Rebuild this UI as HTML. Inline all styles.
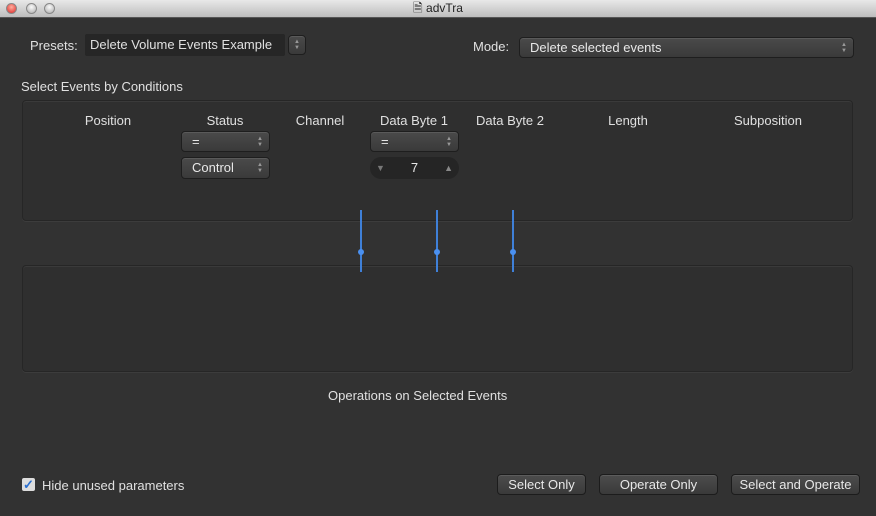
<!DOCTYPE html><html><head><style>
body{margin:0;width:876px;height:516px;background:#323232;font-family:"Liberation Sans",sans-serif;color:#e0e0e0;font-size:13px;position:relative;overflow:hidden}
.a{position:absolute}
.title{left:0;top:0;width:876px;height:17px;background:linear-gradient(#e8e8e8,#bdbdbd);border-bottom:1px solid #555;text-align:center;color:#222;font-size:12px;line-height:17px}
.tl{width:11px;height:11px;border-radius:50%;top:3px;background:radial-gradient(circle at 50% 35%,#fafafa,#aaa);border:1px solid #888;box-sizing:border-box}
.pop{background:linear-gradient(#4a4a4a,#3a3a3a);border:1px solid #1e1e1e;border-radius:4px;box-shadow:inset 0 1px 0 #5a5a5a;box-sizing:border-box;color:#e8e8e8;padding-left:10px}
.ar{position:absolute;right:6px;top:50%;transform:translateY(-50%);font-size:6px;line-height:6px;color:#999;text-align:center}
.panel{background:#2f2f2f;border:1px solid #262626;border-radius:4px;box-shadow:inset 0 1px 0 #3a3a3a,0 1px 0 #3c3c3c;box-sizing:border-box}
.btn{background:linear-gradient(#4c4c4c,#3a3a3a);border:1px solid #1c1c1c;border-radius:4px;box-shadow:inset 0 1px 0 #5c5c5c;box-sizing:border-box;text-align:center;color:#e8e8e8;height:21px;line-height:19px}
.hd{top:113px;text-align:center}
.ln{width:2px;background:#3f80d8}
.dot{width:6px;height:6px;border-radius:50%;background:#4a90f0}
</style></head><body>
<div class="a title">🗎 advTra</div>
<div class="a tl" style="left:6px;background:radial-gradient(circle at 50% 35%,#ffb0a0,#d22)"></div>
<div class="a tl" style="left:26px"></div>
<div class="a tl" style="left:44px"></div>
<div class="a" style="left:30px;top:38px">Presets:</div>
<div class="a" style="left:85px;top:34px;width:200px;height:22px;background:#262626;border-radius:2px;line-height:22px;padding-left:5px;box-sizing:border-box">Delete Volume Events Example</div>
<div class="a pop" style="left:288px;top:35px;width:18px;height:20px;padding:0"><div class="ar" style="right:5px">▲<br>▼</div></div>
<div class="a" style="left:473px;top:39px">Mode:</div>
<div class="a pop" style="left:519px;top:37px;width:335px;height:21px;line-height:19px">Delete selected events<div class="ar">▲<br>▼</div></div>
<div class="a" style="left:21px;top:79px">Select Events by Conditions</div>
<div class="a panel" style="left:22px;top:100px;width:831px;height:121px"></div>
<div class="a hd" style="left:58px;width:100px">Position</div>
<div class="a hd" style="left:175px;width:100px">Status</div>
<div class="a hd" style="left:270px;width:100px">Channel</div>
<div class="a hd" style="left:364px;width:100px">Data Byte 1</div>
<div class="a hd" style="left:460px;width:100px">Data Byte 2</div>
<div class="a hd" style="left:578px;width:100px">Length</div>
<div class="a hd" style="left:718px;width:100px">Subposition</div>
<div class="a pop" style="left:181px;top:131px;width:89px;height:21px;line-height:19px">=<div class="ar">▲<br>▼</div></div>
<div class="a pop" style="left:181px;top:157px;width:89px;height:22px;line-height:20px">Control<div class="ar">▲<br>▼</div></div>
<div class="a pop" style="left:370px;top:131px;width:89px;height:21px;line-height:19px">=<div class="ar">▲<br>▼</div></div>
<div class="a" style="left:370px;top:157px;width:89px;height:22px;background:#252525;border-radius:11px;line-height:22px;text-align:center;color:#e8e8e8">7
<span class="a" style="left:6px;top:0;font-size:9px;color:#777">▼</span><span class="a" style="right:6px;top:0;font-size:9px;color:#888">▲</span></div>
<div class="a panel" style="left:22px;top:265px;width:831px;height:107px"></div>
<div class="a ln" style="left:360px;top:210px;height:62px"></div>
<div class="a ln" style="left:436px;top:210px;height:62px"></div>
<div class="a ln" style="left:512px;top:210px;height:62px"></div>
<div class="a dot" style="left:358px;top:249px"></div>
<div class="a dot" style="left:434px;top:249px"></div>
<div class="a dot" style="left:510px;top:249px"></div>
<div class="a" style="left:328px;top:388px">Operations on Selected Events</div>
<div class="a" style="left:22px;top:478px;width:13px;height:13px;background:#ddd;border-radius:2px;color:#2a6fd0;font-size:13px;line-height:13px;text-align:center;font-weight:bold">✓</div>
<div class="a" style="left:42px;top:478px">Hide unused parameters</div>
<div class="a btn" style="left:497px;top:474px;width:89px">Select Only</div>
<div class="a btn" style="left:599px;top:474px;width:119px">Operate Only</div>
<div class="a btn" style="left:731px;top:474px;width:129px">Select and Operate</div>
</body></html>
